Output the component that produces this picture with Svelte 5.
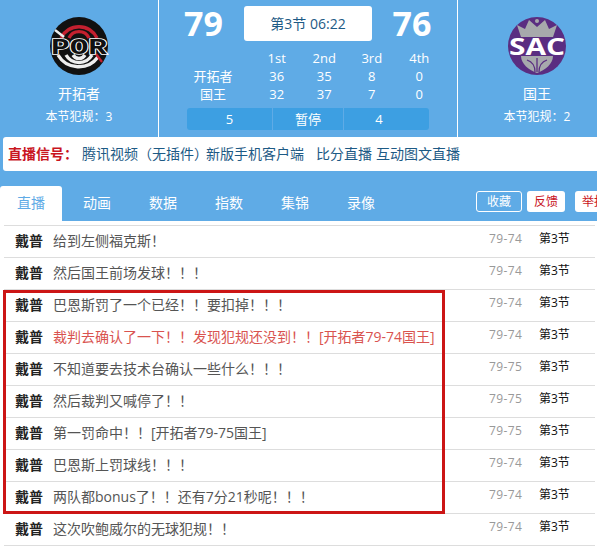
<script>
	const quarters = ['1st', '2nd', '3rd', '4th'];
	const lines = [
		{ name: '开拓者', pts: [36, 35, 8, 0] },
		{ name: '国王', pts: [32, 37, 7, 0] }
	];
	const tabs = ['直播', '动画', '数据', '指数', '集锦', '录像'];
	const links = [
		{ text: '腾讯视频\uFF08无插件\uFF09', w: 124 },
		{ text: '新版手机客户端', w: 110 },
		{ text: '比分直播', w: 60 },
		{ text: '互动图文直播', w: 84 }
	];
	const rows = [
		{ text: '给到左侧福克斯\uFF01', score: '79-74' },
		{ text: '然后国王前场发球\uFF01\uFF01\uFF01', score: '79-74' },
		{ text: '巴恩斯罚了一个已经\uFF01\uFF01要扣掉\uFF01\uFF01\uFF01', score: '79-74' },
		{ text: '裁判去确认了一下\uFF01\uFF01发现犯规还没到\uFF01\uFF01[开拓者79-74国王]', score: '79-74', hot: true },
		{ text: '不知道要去技术台确认一些什么\uFF01\uFF01\uFF01', score: '79-75' },
		{ text: '然后裁判又喊停了\uFF01\uFF01', score: '79-75' },
		{ text: '第一罚命中\uFF01\uFF01[开拓者79-75国王]', score: '79-75' },
		{ text: '巴恩斯上罚球线\uFF01\uFF01\uFF01', score: '79-74' },
		{ text: '两队都bonus了\uFF01\uFF01还有7分21秒呢\uFF01\uFF01\uFF01', score: '79-74' },
		{ text: '这次吹鲍威尔的无球犯规\uFF01\uFF01', score: '79-74' }
	];
</script>

<div class="page">
	<header class="board">
		<section class="team">
			<svg class="logo" viewBox="0 0 60 60" aria-hidden="true">
				<circle cx="30" cy="30" r="29" fill="#111" />
				<g fill="none" stroke-width="3.4">
					<path d="M12 22a20 20 0 0 1 36 0" stroke="#c4202f" />
					<path d="M20 22a11 11 0 0 1 20 0" stroke="#c4202f" />
					<path d="M6 14l9 7" stroke="#eee" stroke-width="2.4" />
					<path d="M9 39a24 24 0 0 0 40 2" stroke="#eee" />
					<path d="M17 39a15 15 0 0 0 26 0" stroke="#eee" />
					<path d="M24 39a7 7 0 0 0 12 0" stroke="#eee" />
					<path d="M47 38l6 8" stroke="#c4202f" stroke-width="2.4" />
				</g>
				<text class="por" x="30" y="38" textLength="56" lengthAdjust="spacingAndGlyphs">POR</text>
			</svg>
			<div class="team-name">开拓者</div>
			<div class="fouls">本节犯规&#xFF1A;3</div>
		</section>

		<section class="middle">
			<div class="scores">
				<span class="score">79</span>
				<span class="clock">第3节 06:22</span>
				<span class="score">76</span>
			</div>
			<div class="quarters">
				<span></span>
				{#each quarters as q}<span>{q}</span>{/each}
				{#each lines as l}
					<span>{l.name}</span>
					{#each l.pts as p}<span>{p}</span>{/each}
				{/each}
			</div>
			<div class="timeouts">
				<span>5</span>
				<span>暂停</span>
				<span>4</span>
			</div>
		</section>

		<section class="team">
			<svg class="logo" viewBox="0 0 60 60" aria-hidden="true">
				<circle cx="30" cy="30" r="29" fill="#5a2d81" />
				<path d="M14 21l-4-12 8 4 4-9 8 7 8-7 4 9 8-4-4 12z" fill="#a7a9ac" />
				<circle cx="30" cy="5" r="2" fill="#a7a9ac" />
				<path d="M14 40h32c0 8-8 14-16 17-8-3-16-9-16-17z" fill="#a7a9ac" />
				<path d="M30 42v14M20 44c6 2 8 7 8 12M40 44c-6 2-8 7-8 12" fill="none" stroke="#5a2d81" stroke-width="1.3" />
				<text class="sac" x="30" y="38.5" textLength="56" lengthAdjust="spacingAndGlyphs">SAC</text>
			</svg>
			<div class="team-name">国王</div>
			<div class="fouls">本节犯规&#xFF1A;2</div>
		</section>
	</header>

	<div class="signal">
		<b>直播信号&#xFF1A;</b>
		{#each links as link}
			<span class="link" style="width: {link.w}px">{link.text}</span>
		{/each}
	</div>

	<nav class="tabs">
		{#each tabs as tab, i}
			<span class="tab" class:active={i === 0}>{tab}</span>
		{/each}
		<div class="actions">
			<span class="btn ghost">收藏</span>
			<span class="btn">反馈</span>
			<span class="btn report">举报</span>
		</div>
	</nav>

	<div class="feed">
		{#each rows as row}
			<div class="row">
				<b class="who">戴普</b>
				<span class="msg" class:hot={row.hot}>{row.text}</span>
				<span class="pts">{row.score}</span>
				<span class="period">第3节</span>
			</div>
		{/each}
		<div class="mark"></div>
	</div>
</div>

<style>
	:global(body) {
		overflow: hidden;
		background: #fff;
	}

	.page {
		width: 616px;
		height: 546px;
		overflow: hidden;
		background: linear-gradient(#5fabe6 221px, #fff 221px);
		font-family: 'Open Sans', 'Noto Sans CJK SC', sans-serif;
		font-size: 14px;
		color: #333;
	}

	.board {
		display: flex;
		height: 137px;
		color: #fff;
	}

	.team {
		width: 158px;
		display: flex;
		flex-direction: column;
		align-items: center;
		padding-top: 16px;
		box-sizing: border-box;
	}

	.logo {
		width: 60px;
		height: 60px;
	}

	.por {
		font: 700 22px 'Liberation Mono', monospace;
		text-anchor: middle;
		fill: #111;
		stroke: #fff;
		stroke-width: 1.6;
		paint-order: stroke;
	}

	.sac {
		font: 700 23px 'Open Sans', sans-serif;
		text-anchor: middle;
		fill: #fff;
	}

	.team-name {
		margin-top: 8px;
		line-height: 20px;
	}

	.fouls {
		margin-top: 4px;
		font-size: 12px;
		line-height: 18px;
	}

	.middle {
		width: 300px;
		box-sizing: border-box;
		border-left: 1px solid #fff;
		border-right: 1px solid #fff;
		padding-top: 6px;
	}

	.scores {
		display: flex;
		align-items: center;
		height: 35px;
	}

	.score {
		width: 85px;
		padding-left: 4px;
		box-sizing: border-box;
		text-align: center;
		font: 700 34px/35px 'Open Sans', sans-serif;
	}

	.score:last-child {
		width: 80px;
		padding: 0;
	}

	.clock {
		width: 128px;
		height: 35px;
		background: #fff;
		border-radius: 3px;
		color: #1d5a85;
		line-height: 35px;
		text-align: center;
	}

	.quarters {
		display: grid;
		grid-template-columns: 80px repeat(4, 47.5px);
		margin: 8px 0 0 14px;
		font-size: 13px;
		line-height: 18px;
		text-align: center;
	}

	.timeouts {
		display: grid;
		grid-template-columns: 85px 71px 86px;
		width: 242px;
		height: 22px;
		margin: 5px 0 0 28px;
		background: #3d9fe2;
		border-radius: 3px;
		line-height: 22px;
		font-size: 13px;
		text-align: center;
	}

	.timeouts span + span {
		border-left: 1px solid #5fabe6;
	}

	.timeouts span:last-child {
		padding-right: 15px;
	}

	.signal {
		display: flex;
		align-items: center;
		height: 32px;
		padding-bottom: 2px;
		margin-left: 3px;
		padding-left: 5px;
		background: #fff;
		border-radius: 3px;
		color: #1d5a85;
		white-space: nowrap;
	}

	.signal b {
		width: 74px;
		color: #c9151e;
		font-weight: 700;
	}

	.link {
		display: inline-block;
	}

	.tabs {
		display: flex;
		gap: 4px;
		height: 35px;
		margin-top: 15px;
		color: #fff;
	}

	.tab {
		width: 62px;
		text-align: center;
		line-height: 34px;
	}

	.tab.active {
		background: #fff;
		color: #5fabe6;
		border-radius: 3px 3px 0 0;
	}

	.actions {
		display: flex;
		gap: 5px;
		margin: 5px 3px 0 auto;
		height: 21px;
		font-size: 12px;
	}

	.btn {
		width: 38px;
		background: #fff;
		color: #c9151e;
		border-radius: 3px;
		line-height: 21px;
		text-align: center;
	}

	.btn.report {
		margin-left: 5px;
	}

	.btn.ghost {
		width: 46px;
		box-sizing: border-box;
		background: none;
		color: #fff;
		border: 1px solid #fff;
		line-height: 19px;
	}

	.feed {
		position: relative;
		width: 591px;
		margin: 4px 0 0 4px;
		border-top: 1px solid #ddd;
	}

	.row {
		display: flex;
		height: 31px;
		border-bottom: 1px solid #ddd;
		white-space: nowrap;
	}

	.who {
		width: 38px;
		margin-left: 11px;
		line-height: 30px;
		color: #222;
	}

	.msg {
		width: 436px;
		line-height: 30px;
		color: #555;
	}

	.msg.hot {
		color: #d9534f;
	}

	.pts {
		width: 50px;
		font-size: 12px;
		letter-spacing: 0.4px;
		line-height: 26px;
		color: #999;
	}

	.period {
		font-size: 12px;
		line-height: 26px;
		color: #111;
	}

	.mark {
		position: absolute;
		left: -1px;
		top: 64px;
		width: 442px;
		height: 224px;
		box-sizing: border-box;
		border: 3px solid #cc1515;
		pointer-events: none;
	}
</style>
